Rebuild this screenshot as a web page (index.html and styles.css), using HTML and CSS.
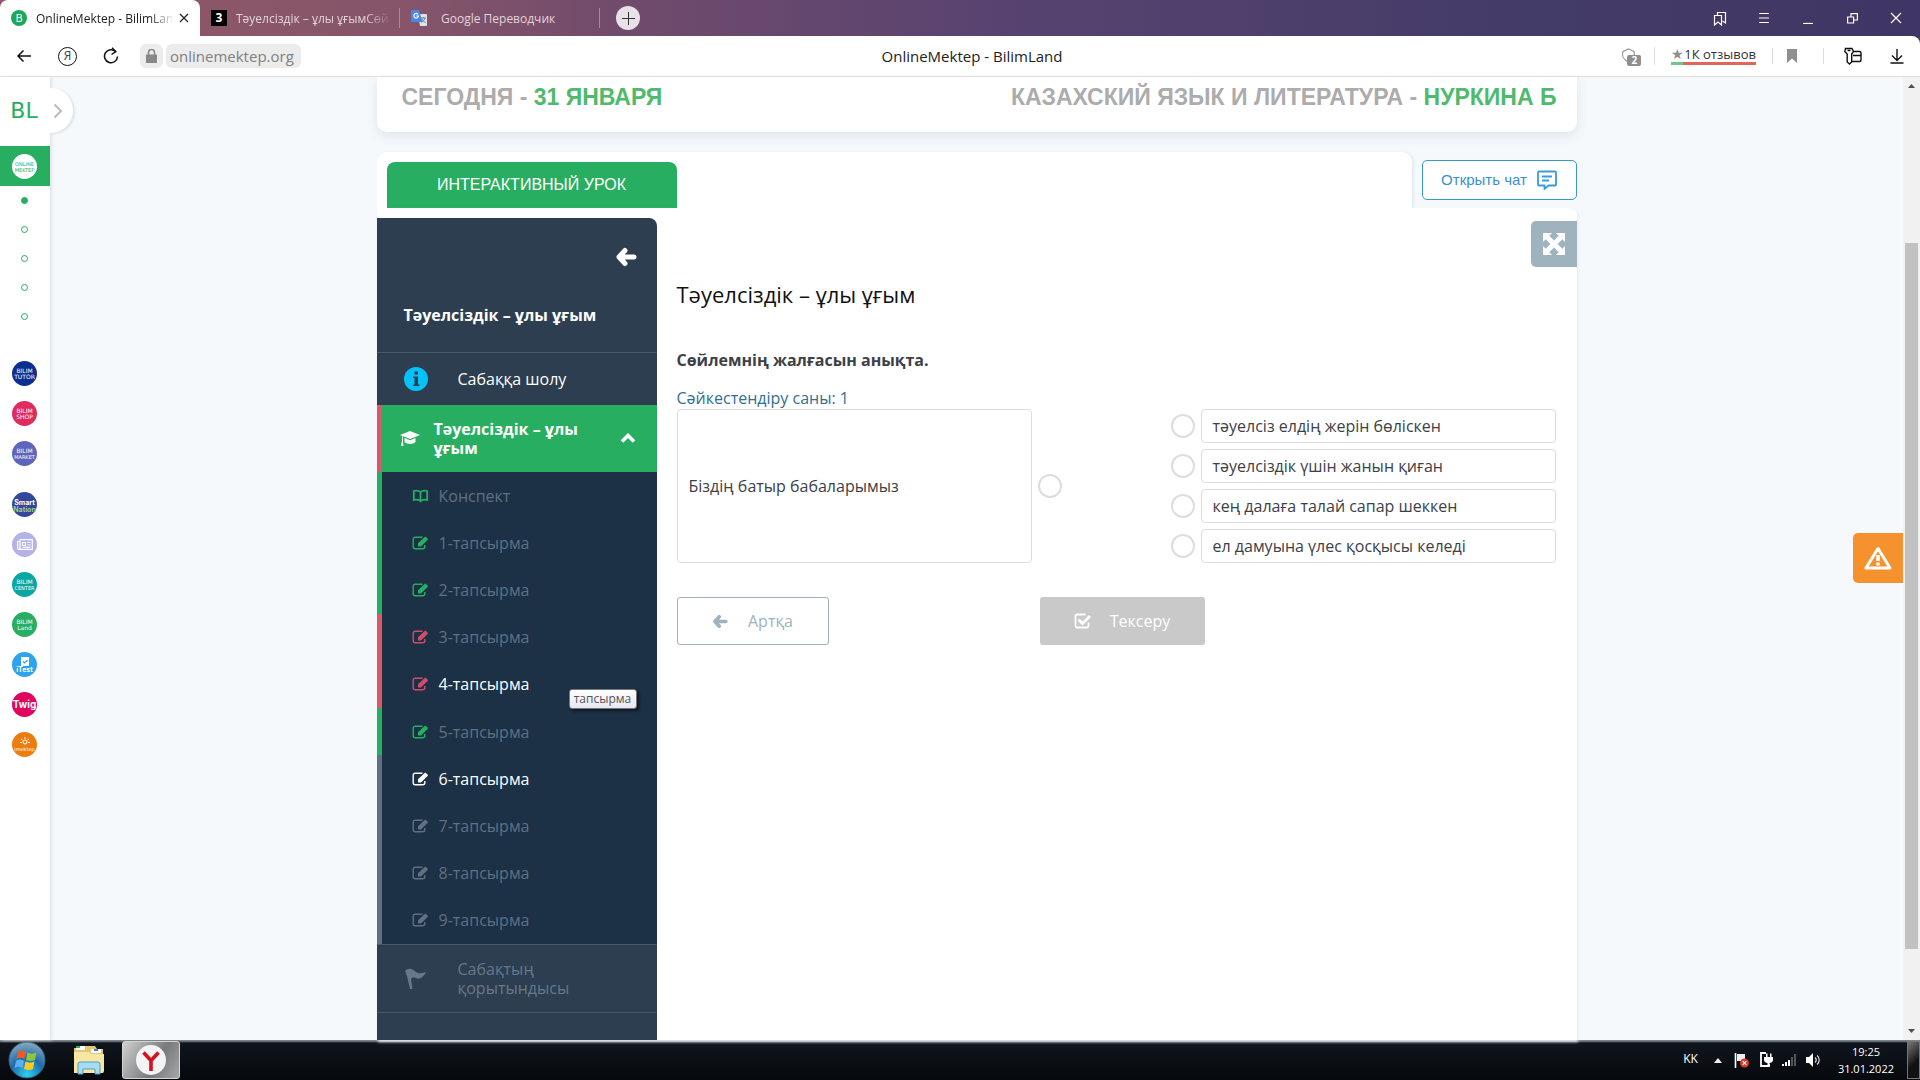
FILE: index.html
```
<!DOCTYPE html>
<html lang="kk">
<head>
<meta charset="utf-8">
<title>OnlineMektep - BilimLand</title>
<link rel="stylesheet" href="styles.css">
</head>
<body>
<svg class="defs" aria-hidden="true">
  <symbol id="i-edit" viewBox="0 0 17 14"><path d="M10.5 1.2H3.2a2 2 0 0 0-2 2v7.6a2 2 0 0 0 2 2h7.6a2 2 0 0 0 2-2V9" fill="none" stroke="currentColor" stroke-width="1.4"/><path d="M6 7.2 12.6.9a1 1 0 0 1 1.3 0l1.7 1.7a1 1 0 0 1 0 1.3L9 10.4H6z" fill="currentColor"/></symbol>
  <symbol id="i-book" viewBox="0 0 17 14"><path d="M8.5 3v9.5M8.5 3C7 1.8 4 1.4 1.8 2v9c2.200-.6 5.200-.2 6.700 1.200C10 10.800 13 10.400 15.200 11V2C13 1.400 10 1.800 8.500 3z" fill="none" stroke="currentColor" stroke-width="1.800"/></symbol>
  <symbol id="i-arrow" viewBox="0 0 22 20"><path d="M10 3.500 4 10l6 6.500M5 10h14" fill="none" stroke="currentColor" stroke-width="5" stroke-linecap="round" stroke-linejoin="round"/></symbol>
</svg>

<header class="tabs">
  <div class="tab tab-active"><span class="fav fav-b">B</span><span class="tab-text">OnlineMektep - BilimLan</span>
    <button class="plain" aria-label="Close tab"><svg width="10" height="10"><path d="M1 1l8 8M9 1l-8 8" stroke="#222" stroke-width="1.200"/></svg></button></div>
  <div class="tab"><span class="fav fav-3">3</span><span class="tab-text">Тәуелсіздік – ұлы ұғымСөй</span></div>
  <div class="tab"><svg class="fav" width="16" height="16" viewBox="0 0 16 16"><path d="M7 4h8a1 1 0 0 1 1 1v10a1 1 0 0 1-1 1H9z" fill="#dfe3e8"/><path d="M10 8h5M12.500 7v1M14 8c-.5 2-2 3.500-3.500 4.500M11 9c.5 1.500 2 3 3.500 3.500" stroke="#6b8096" fill="none"/><path d="M1 0h7l3.500 12H1a1 1 0 0 1-1-1V1a1 1 0 0 1 1-1z" fill="#4a86e8"/><path d="M7 4.300A2.300 2.300 0 1 0 7.500 6H5.300" stroke="#fff" fill="none" stroke-width="1.200"/></svg><span class="tab-text">Google Переводчик</span></div>
  <button class="new-tab" aria-label="New tab"><svg width="13" height="13"><path d="M6.500 0v13M0 6.500h13" stroke="#333"/></svg></button>
  <div class="window-buttons">
    <button class="plain" aria-label="Collections"><svg width="14" height="15"><path d="M1.500 4.500h7v9.500l-3.500-3-3.500 3zM4.500 4V1.500h8V12l-3-2" fill="none" stroke="#fff" stroke-width="1.200"/></svg></button>
    <button class="plain" aria-label="Menu"><svg width="12" height="10"><path d="M1 .5h10M1 5h10M1 9.500h10" stroke="#fff"/></svg></button>
    <button class="plain" aria-label="Minimize"><svg width="12" height="12"><path d="M1 11.500h10" stroke="#fff" stroke-width="1.200"/></svg></button>
    <button class="plain" aria-label="Restore"><svg width="11" height="11"><path d="M.6 4h6v6h-6zM4 3.500V.6h6.400V7H7" fill="none" stroke="#fff" stroke-width="1.200"/></svg></button>
    <button class="plain" aria-label="Close"><svg width="12" height="12"><path d="M1 1l10 10M11 1L1 11" stroke="#fff" stroke-width="1.200"/></svg></button>
  </div>
</header>

<div class="toolbar-wrap">
<nav class="toolbar">
  <div class="tool-left">
    <button class="plain" aria-label="Back"><svg width="16" height="14"><path d="M15 7H2M7.500 1.500L2 7l5.500 5.500" fill="none" stroke="#111" stroke-width="1.500"/></svg></button>
    <button class="ya" aria-label="Yandex">Я</button>
    <button class="plain" aria-label="Reload"><svg width="16" height="18" viewBox="0 0 16 18"><path d="M12.500 4.500A6.500 6.500 0 1 0 14.500 9.500" fill="none" stroke="#111" stroke-width="1.500"/><path d="M9 .8 12.800 4.600 8.500 7.500" fill="none" stroke="#111" stroke-width="1.500"/></svg></button>
    <div class="address"><button class="lock" aria-label="Secure"><svg width="11" height="14"><path d="M0 5.500h11V14H0z" fill="#888"/><path d="M2.500 6V3.500a3 3 0 0 1 6 0V6" fill="none" stroke="#888" stroke-width="1.600"/></svg></button><button class="url">onlinemektep.org</button></div>
  </div>
  <p class="page-name">OnlineMektep - BilimLand</p>
  <div class="tool-right">
    <button class="shield" aria-label="Protect"><svg width="15" height="16"><path d="M7.500 1 13 3.500C14 8 12 12 7.500 14 3 12 .500 8 2 3.500z" fill="none" stroke="#999" stroke-width="1.200"/></svg><span class="badge">2</span></button>
    <button class="reviews"><span class="star">★</span>1К отзывов</button>
    <button class="mark" aria-label="Bookmark"><svg width="10" height="14"><path d="M0 0h10v14L5 9.500 0 14z" fill="#8f8f8f"/></svg></button>
    <button class="plain" aria-label="Passwords"><svg width="18" height="18"><path d="M1.500 1.500h6.500l1.500 3-1.800 2.500v8L5.500 17l-2.300-2V7L.800 4.500zM3.500 3.500h3M9 4.500h6.500a1.500 1.500 0 0 1 1.500 1.500v7a1.500 1.500 0 0 1-1.500 1.500H8M9 8.500h8" fill="none" stroke="#111" stroke-width="1.400"/></svg></button>
    <button class="plain download" aria-label="Downloads"><svg width="14" height="15"><path d="M7 0v11M2 6.500l5 5 5-5M.5 14h13" fill="none" stroke="#111" stroke-width="1.400"/></svg></button>
  </div>
</nav>
</div>

<div class="viewport">
  <aside class="rail">
    <div class="logo">BL</div>
    <button class="expander" aria-label="Expand menu"><svg width="10" height="16"><path d="M1.500 1.500 8 8l-6.500 6.500" fill="none" stroke="#b4bcc4" stroke-width="2"/></svg></button>
    <a class="rail-current" href="#"><span class="coin coin-white">ONLINE<br>MEKTEP</span></a>
    <ul class="dots"><li class="on"></li><li></li><li></li><li></li><li></li></ul>
    <div class="coins">
      <a href="#" class="coin navy">BILIM<br>TUTOR</a>
      <a href="#" class="coin rose">BILIM<br>SHOP</a>
      <a href="#" class="coin violet">BILIM<br><span class="tiny">MARKET</span></a>
    </div>
    <div class="coins coins-next">
      <a href="#" class="coin blue bold">Smart<br><span class="lime">Nation</span></a>
      <a href="#" class="coin lilac" aria-label="News"><svg width="16" height="11"><path d="M3 .7h12.300v9.600H1.500a1 1 0 0 1-.8-1V2.500H3zM3 2v8M5.500 3.500h3v3h-3zM10.500 3.500h3M10.500 6h3M5.500 8.300h8" fill="none" stroke="#fff" stroke-width="1.200"/></svg></a>
      <a href="#" class="coin teal">BILIM<br><span class="tiny">CENTER</span></a>
      <a href="#" class="coin green">BILIM<br>Land</a>
      <a href="#" class="coin sky bold"><svg width="10" height="9"><path d="M1 0h8v9H1z" fill="#fff"/><path d="M3 4.500l1.500 1.500 3-3" fill="none" stroke="#2ea3ee" stroke-width="1.200"/></svg>iTest</a>
      <a href="#" class="coin pink bold twig">Twig</a>
      <a href="#" class="coin orange"><svg width="10" height="9"><circle cx="5" cy="5" r="2" fill="none" stroke="#fff"/><path d="M5 0v2M1 2l1.500 1M9 2L7.500 3M0 5.500h2M8 5.500h2" stroke="#fff"/></svg><span class="tiny">imektep</span></a>
    </div>
  </aside>

  <main class="page">
    <div class="column">
      <section class="lesson-head">
        <h2>СЕГОДНЯ - <b>31 ЯНВАРЯ</b></h2>
        <h2>КАЗАХСКИЙ ЯЗЫК И ЛИТЕРАТУРА - <b>НУРКИНА Б</b></h2>
      </section>
      <div class="tab-row">
        <div class="tab-panel"><button class="lesson-tab">ИНТЕРАКТИВНЫЙ УРОК</button></div>
        <button class="chat">Открыть чат<svg width="20" height="20"><path d="M2 1.500h16a1 1 0 0 1 1 1v12a1 1 0 0 1-1 1h-6.500L7.500 19v-3.500H2a1 1 0 0 1-1-1v-12a1 1 0 0 1 1-1zM5 6.500h10M5 10.500h7" fill="none" stroke="#3a9ade" stroke-width="1.800"/></svg></button>
      </div>
      <section class="workspace">
        <nav class="course">
          <div class="course-head">
            <button class="plain white" aria-label="Hide menu"><svg width="22" height="20"><use href="#i-arrow"/></svg></button>
            <h3>Тәуелсіздік – ұлы ұғым</h3>
          </div>
          <a href="#" class="row"><svg width="24" height="24"><circle cx="12" cy="12" r="12" fill="#07c1fb"/><path d="M10.500 4.500h3.500v3h-3.500zM9 9.500h5v8h1.500v1.500H9v-1.500h1.500V11H9z" fill="#2c3e50"/></svg><span>Сабаққа шолу</span></a>
          <a href="#" class="row row-open"><svg width="20" height="16"><path d="M10 0 20 4 10 8 0 4z" fill="#fff"/><path d="M4.500 7v4c2 2.500 9 2.500 11 0V7L10 9.300z" fill="#fff"/><path d="M2 5v5l-1 5h2.500l-.6-5V5.500z" fill="#fff"/></svg><span>Тәуелсіздік – ұлы ұғым</span><svg width="16" height="11"><path d="M2 8.500l6-6 6 6" fill="none" stroke="#fff" stroke-width="3.600"/></svg></a>
          <ul class="tasks">
            <li class="good"><a href="#"><svg width="17" height="14"><use href="#i-book"/></svg>Конспект</a></li>
            <li class="good"><a href="#"><svg width="17" height="14"><use href="#i-edit"/></svg>1-тапсырма</a></li>
            <li class="good"><a href="#"><svg width="17" height="14"><use href="#i-edit"/></svg>2-тапсырма</a></li>
            <li class="bad"><a href="#"><svg width="17" height="14"><use href="#i-edit"/></svg>3-тапсырма</a></li>
            <li class="bad"><a href="#" class="lit"><svg width="17" height="14"><use href="#i-edit"/></svg>4-тапсырма</a><span class="tip" role="tooltip">тапсырма</span></li>
            <li class="good"><a href="#"><svg width="17" height="14"><use href="#i-edit"/></svg>5-тапсырма</a></li>
            <li class="now"><a href="#" class="lit"><svg width="17" height="14"><use href="#i-edit"/></svg>6-тапсырма</a></li>
            <li><a href="#"><svg width="17" height="14"><use href="#i-edit"/></svg>7-тапсырма</a></li>
            <li><a href="#"><svg width="17" height="14"><use href="#i-edit"/></svg>8-тапсырма</a></li>
            <li><a href="#"><svg width="17" height="14"><use href="#i-edit"/></svg>9-тапсырма</a></li>
          </ul>
          <a href="#" class="row row-end"><svg width="24" height="22"><path d="M1 3C5-1 9 1 12 4c3 2 6 1 10 0-3 6-7 8-10 6-3-1-4 0-5 1l1.500 10H6L3 8z" fill="#66788a"/></svg><span>Сабақтың қорытындысы</span></a>
        </nav>
        <article class="exercise">
          <button class="expand" aria-label="Fullscreen"><svg width="22" height="22"><path d="M0 0h9L6.300 2.700 11 7.400l4.700-4.700L13 0h9v9l-2.700-2.700L14.600 11l4.700 4.700L22 13v9h-9l2.700-2.700L11 14.600l-4.700 4.700L9 22H0v-9l2.700 2.700L7.400 11 2.700 6.300 0 9z" fill="#fff"/></svg></button>
          <h1>Тәуелсіздік – ұлы ұғым</h1>
          <p class="question">Сөйлемнің жалғасын анықта.</p>
          <p class="count">Сәйкестендіру саны: 1</p>
          <div class="match">
            <label class="box" for="left1">Біздің батыр бабаларымыз</label>
            <input type="radio" id="left1" name="left">
            <div class="answers">
              <div class="answer"><input type="radio" id="r1" name="right"><label class="box" for="r1">тәуелсіз елдің жерін бөліскен</label></div>
              <div class="answer"><input type="radio" id="r2" name="right"><label class="box" for="r2">тәуелсіздік үшін жанын қиған</label></div>
              <div class="answer"><input type="radio" id="r3" name="right"><label class="box" for="r3">кең далаға талай сапар шеккен</label></div>
              <div class="answer"><input type="radio" id="r4" name="right"><label class="box" for="r4">ел дамуына үлес қосқысы келеді</label></div>
            </div>
          </div>
          <div class="actions">
            <button class="btn btn-back"><svg width="16" height="15" viewBox="0 0 22 20"><use href="#i-arrow"/></svg>Артқа</button>
            <button class="btn btn-check"><svg width="18" height="16"><path d="M11.500 1.500H3a1.500 1.500 0 0 0-1.500 1.500v10A1.500 1.500 0 0 0 3 14.500h10a1.500 1.500 0 0 0 1.500-1.500V9.500" fill="none" stroke="#fff" stroke-width="1.800"/><path d="M4.500 6.500l4 4L16 3" fill="none" stroke="#fff" stroke-width="2.800"/></svg>Тексеру</button>
          </div>
        </article>
      </section>
    </div>
    <button class="alert" aria-label="Report a problem"><svg width="28" height="24"><path d="M14 2.500 26 22H2z" fill="none" stroke="#fff" stroke-width="3" stroke-linejoin="round"/><path d="M14 9v6M14 16.500v3" stroke="#fff" stroke-width="3.500"/></svg></button>
  </main>

  <div class="scrollbar"><svg width="7" height="4"><path d="M0 4 3.500 0 7 4z" fill="#505050"/></svg><div class="track"><div class="thumb"></div></div><svg width="7" height="4"><path d="M0 0l3.500 4L7 0z" fill="#505050"/></svg></div>
</div>

<footer class="taskbar">
  <button class="start" aria-label="Start"><svg width="38" height="38" viewBox="0 0 38 38"><defs><radialGradient id="orb" cx=".5" cy=".9" r=".9"><stop offset="0" stop-color="#2fd0f5"/><stop offset=".5" stop-color="#1a6cab"/><stop offset="1" stop-color="#8aa9bd"/></radialGradient></defs><circle cx="19" cy="19" r="18" fill="url(#orb)" stroke="#3e5a70"/><path d="M10 11c3-2 5-2 8 0l-1.500 7c-3-2-5-1.500-8 0z" fill="#ec5a2a"/><path d="M19.500 11.500c3 1.500 6 1.500 9 0L27 19c-3 1.500-6 1-9 0z" fill="#8cc63f"/><path d="M8 20c3-2 5-2 8 0l-1.500 7c-3-2-5-1.500-8 0z" fill="#5cb0ee"/><path d="M17.500 20.500c3 1.500 6 1.500 9 0L25 28c-3 1.500-6 1-9 0z" fill="#fcc926"/></svg></button>
  <button class="files" aria-label="Explorer"><svg width="34" height="32" viewBox="0 0 34 32"><path d="M2 4h9l2-2h10l2 3h6v24H2z" fill="#e3c873"/><path d="M4 2h9v4H4z" fill="#fff"/><path d="M4 2h4v2H4z" fill="#35a853"/><path d="M19 5h10v4H19z" fill="#fff"/><path d="M22 5h4v2h-4z" fill="#3b7dd8"/><path d="M2 8h15l2 2h13v17a2 2 0 0 1-2 2H4a2 2 0 0 1-2-2z" fill="#f7e6a4"/><path d="M6 30V20a2 2 0 0 1 2-2h18a2 2 0 0 1 2 2v10h-5v-5H11v5z" fill="#a9dbf2" stroke="#4d9fc8"/></svg></button>
  <button class="running" aria-label="Yandex Browser"><svg width="30" height="30"><circle cx="15" cy="15" r="15" fill="#f4f4f4"/><path d="M7.500 7.500 15 15.500l7.500-8M15 14.500V26" fill="none" stroke="#d4121f" stroke-width="3.600"/></svg></button>
  <div class="tray">
    <span class="lang">KK</span>
    <svg width="8" height="5"><path d="M0 5l4-5 4 5z" fill="#eee"/></svg>
    <svg width="16" height="16"><path d="M1.500 1v15" stroke="#fff" stroke-width="1.600"/><path d="M3 2h8v7H3z" fill="#eee"/><circle cx="10.500" cy="11" r="4.500" fill="#d8392b"/><path d="M8.700 9.200l3.600 3.600M12.300 9.200l-3.600 3.600" stroke="#fff" stroke-width="1.200"/></svg>
    <svg width="14" height="16"><path d="M7 1H2v13h8v-2" fill="none" stroke="#fff" stroke-width="1.800"/><path d="M5 5h9v3c0 2-2 3-3.500 3v3h-2v-3C7 11 5 10 5 8zM7 1.500h1.500V5H7zM11 1.500h1.500V5H11z" fill="#fff"/></svg>
    <svg width="15" height="12"><path d="M0 10h2v2H0zM3 8h2v4H3zM6 6h2v6H6z" fill="#fff"/><path d="M9 3h2v9H9zM12 0h2v12h-2z" fill="#555"/></svg>
    <svg width="16" height="14"><path d="M0 4h3l4-4v14l-4-4H0z" fill="#fff"/><path d="M9 4.500c1.500 1.500 1.500 3.500 0 5M11 2.500c3 2.500 3 6.500 0 9" fill="none" stroke="#ddd" stroke-width="1.200"/></svg>
    <time class="clock">19:25<br>31.01.2022</time>
    <button class="desktop" aria-label="Show desktop"></button>
  </div>
</footer>
</body>
</html>
```
FILE: styles.css
```
* { box-sizing: border-box; }
body {
  margin: 0;
  height: 100vh;
  display: flex;
  flex-direction: column;
  overflow: hidden;
  font-family: "Open Sans", "Noto Sans", sans-serif;
  font-size: 16px;
  color: #3d4147;
}
h1, h2, h3, p, ul { margin: 0; padding: 0; }
ul { list-style: none; }
a { color: inherit; text-decoration: none; }
button { font: inherit; color: inherit; border: 0; margin: 0; padding: 0; background: none; }
svg { display: block; flex: none; }
.defs { display: none; }
.plain { display: flex; align-items: center; justify-content: center; }
.white { color: #fff; }

/* Browser frame */
.tabs {
  height: 36px;
  flex: none;
  display: flex;
  align-items: center;
  background: linear-gradient(90deg, #905866 0, #86556a 21%, #714b6c 32%, #584370 52%, #433b68 80%, #403665 100%);
}
.tab {
  width: 200px;
  height: 36px;
  display: flex;
  align-items: center;
  gap: 14px;
  padding: 0 8px 0 11px;
  font-size: 12px;
  color: #e3d3da;
  position: relative;
}
.tab:nth-child(2) { gap: 9px; }
.tab + .tab::after { content: ""; position: absolute; right: 0; top: 8px; height: 20px; width: 1px; background: #a88796; }
.tab-text { flex: 1; min-width: 0; white-space: nowrap; mask-image: linear-gradient(90deg, #000 82%, transparent); }
.tab:nth-child(3) .tab-text { mask-image: none; }
.tab-active { background: #fff; color: #222; border-radius: 8px 8px 0 0; gap: 9px; padding-right: 11px; }
.tab-active .tab-text { margin-right: -4px; }
.fav { width: 16px; height: 16px; flex: none; text-align: center; line-height: 16px; }
.fav-b { border-radius: 8px; background: #1fa65a; color: #fff; font-size: 11px; }
.fav-3 { background: #000; color: #fff; font-weight: 700; font-size: 12px; }
.new-tab { width: 24px; height: 24px; margin-left: 16px; border-radius: 12px; background: #e9e1e8; display: flex; align-items: center; justify-content: center; }
.window-buttons { margin-left: auto; display: flex; padding-right: 2px; }
.window-buttons button { width: 44px; height: 36px; }

.toolbar-wrap { background: #403665; flex: none; }
.toolbar {
  height: 41px;
  display: grid;
  grid-template-columns: 1fr auto 1fr;
  align-items: center;
  padding: 0 16px;
  background: #fff;
  border-bottom: 1px solid #ddd;
  border-radius: 0 8px 0 0;
}
.tool-left { display: flex; align-items: center; gap: 26px; }
.ya { width: 19px; height: 19px; border: 1px solid #111; border-radius: 10px; font-size: 12px; line-height: 16px; }
.address { display: flex; gap: 3px; margin-left: -5px; }
.lock, .url { height: 24px; background: #ececec; border-radius: 6px; color: #808080; }
.lock { width: 23px; display: flex; align-items: center; justify-content: center; }
.url { padding: 0 7px 0 4px; font-size: 15px; line-height: 22px; }
.page-name { font-size: 15px; color: #222; padding-left: 24px; }
.tool-right { display: flex; align-items: center; justify-content: flex-end; }
.shield { position: relative; width: 34px; height: 18px; border-right: 1px solid #ddd; }
.badge { position: absolute; left: 6px; top: 8px; width: 14px; height: 11px; border-radius: 2px; background: #8f8f8f; color: #fff; font: 700 10px/11px "Open Sans", sans-serif; }
.reviews { margin: 0 16px; padding-bottom: 1px; font-size: 13px; color: #333; line-height: 14px; border-bottom: 3px solid; border-image: linear-gradient(90deg, #74c492 15%, #e2645c 15%) 1; }
.star { color: #8f8f8f; font-size: 14px; }
.mark { width: 52px; height: 16px; padding-left: 14px; border: solid #ddd; border-width: 0 1px; margin-right: 20px; }
.download { margin-left: 28px; }

/* Page area */
.viewport { flex: 1; min-height: 0; display: flex; background: #f5f9fc; }
.rail { width: 50px; flex: none; position: relative; z-index: 2; background: #fff; box-shadow: 2px 0 3px #dfe5ea; display: flex; flex-direction: column; }
.logo { height: 69px; line-height: 68px; text-align: center; font-family: "DejaVu Sans", sans-serif; font-size: 22px; color: #27ae60; padding-right: 2px; }
.expander { position: absolute; left: 28px; top: 11px; width: 45px; height: 45px; border-radius: 23px; background: linear-gradient(90deg, transparent 20px, #fff 20px); display: flex; align-items: center; justify-content: flex-end; padding-right: 10px; filter: drop-shadow(2px 1px 1px #dde3e8); }
.rail-current { height: 40px; background: #27ae60; display: flex; align-items: center; justify-content: center; padding-right: 1px; }
.coin { width: 25px; height: 25px; border-radius: 13px; display: flex; flex-direction: column; align-items: center; justify-content: center; text-align: center; color: #fff; font: 6px/6px "DejaVu Sans", sans-serif; flex: none; white-space: nowrap; }
.coin-white { background: #fff; color: #27ae60; font-size: 5px; }
.dots { display: flex; flex-direction: column; align-items: center; gap: 22px; padding: 11px 2px 0 0; }
.dots li { width: 7px; height: 7px; border: 1px solid #27ae60; border-radius: 4px; }
.dots .on { background: #27ae60; }
.coins { display: flex; flex-direction: column; align-items: center; gap: 15px; padding: 41px 1px 0 0; }
.coins-next { padding-top: 26px; }
.coin:not(:has(svg)) { display: block; padding-top: 7px; }
.bold { font: 700 7px/7px "Inter", sans-serif; }
.coin.twig { font-size: 10px; line-height: 11px; }
.tiny { font-size: 5px; }
.lime { color: #9bd08a; }
.navy { background: #0b2f8e; } .rose { background: #e02b5f; } .violet { background: #5e65bb; }
.blue { background: #33479c; } .lilac { background: #b5b2e6; } .teal { background: #0ba6a4; }
.green { background: #27ae60; } .sky { background: #2ea3ee; } .pink { background: #e0045f; } .orange { background: #ec7c0e; }

.page { flex: 1; min-width: 0; position: relative; display: flex; justify-content: center; }
.column { width: 100%; max-width: 1200px; display: flex; flex-direction: column; }
.lesson-head { display: flex; justify-content: space-between; padding: 6px 20px 21px 25px; background: #fff; border-radius: 0 0 10px 10px; box-shadow: 0 4px 12px #dfe4e8; }
.lesson-head h2 { font: 700 23px/28px "Liberation Sans", Arial, sans-serif; color: #acacac; }
.lesson-head b { color: #4fba6c; }
.tab-row { margin-top: 20px; display: flex; gap: 10px; }
.tab-panel { flex: 1; background: #fff; border-radius: 10px 10px 0 0; padding: 10px 10px 0; box-shadow: 2px 0 3px #e3ebf2; }
.lesson-tab { display: block; width: 290px; height: 46px; background: #27ae60; color: #fff; border-radius: 8px 8px 0 0; font: 16px/46px "Liberation Sans", Arial, sans-serif; }
.chat { margin-top: 8px; width: 155px; height: 40px; display: flex; align-items: center; justify-content: center; gap: 10px; border: 1px solid #3a9bc0; border-radius: 5px; background: #fff; color: #3a8fd0; font: 15px/20px "Liberation Sans", Arial, sans-serif; }
.workspace { flex: 1; min-height: 0; display: flex; background: #fff; border-radius: 0 8px 0 0; padding-top: 10px; box-shadow: 1px 2px 3px #e3ebf2; position: relative; }

/* Course menu */
.course { width: 280px; flex: none; background: #2c3e50; border-radius: 0 8px 0 0; color: #fff; }
.course-head { height: 135px; padding: 29px 20px 0 27px; border-bottom: 1px solid #46586a; display: flex; flex-direction: column; align-items: flex-end; gap: 36px; }
.course-head h3 { width: 100%; font-size: 16px; line-height: 24px; }
.row { display: flex; align-items: center; height: 52px; padding-left: 27px; gap: 30px; line-height: 19px; }
.row-open { height: 67px; background: #27ae60; border-left: 5px solid #d9596a; padding: 0 21px 0 18px; gap: 14px; font-weight: 700; }
.row-open span { flex: 1; padding-right: 16px; }
.tasks { height: 472px; display: grid; grid-auto-rows: 1fr; background: #1c3046; color: #5f7080; }
.tasks li { border-left: 5px solid #5f7080; position: relative; display: flex; }
.tasks a { flex: 1; display: flex; align-items: center; gap: 10px; padding-left: 30px; }
.tasks .good { border-color: #27ae60; } .tasks .good svg { color: #27ae60; }
.tasks .bad { border-color: #d9596a; } .tasks .bad svg { color: #cf4d6c; }
.tasks .lit, .tasks .now svg { color: #fff; }
.tip { position: absolute; left: 187px; top: 28px; width: 68px; height: 20px; border: 1px solid #777; border-radius: 3px; background: linear-gradient(#fff, #e6e7f2); color: #555; font: 12px/17px "Open Sans", sans-serif; text-align: center; box-shadow: 2px 2px 3px #0008; z-index: 1; }
.row-end { height: 69px; color: #66788a; border: solid #46586a; border-width: 1px 0; padding-right: 60px; }

/* Exercise */
.exercise { flex: 1; min-width: 0; padding: 59px 21px 0 20px; }
.expand { position: absolute; right: 0; top: 13px; width: 46px; height: 46px; background: #9fb3bf; border-radius: 5px 0 0 5px; display: flex; align-items: center; justify-content: center; }
h1 { font-size: 22px; line-height: 34px; font-weight: 400; color: #111; }
.question { margin-top: 37px; font-weight: 700; line-height: 24px; }
.count { margin-top: 15px; line-height: 22px; color: #31708f; }
.match { display: flex; align-items: center; gap: 6px; }
.box { flex: 1; border: 1px solid #ddd; border-radius: 4px; padding: 0 11px; display: flex; align-items: center; line-height: 32px; }
.match > .box { align-self: stretch; max-width: 355px; }
.match input { appearance: none; width: 24px; height: 24px; flex: none; margin: 0; border: 2px solid #ddd; border-radius: 12px; background: #fff; }
.answers { flex: 1; max-width: 385px; margin-left: auto; display: flex; flex-direction: column; gap: 6px; }
.answer { display: flex; align-items: center; gap: 6px; }
.actions { display: flex; gap: 211px; margin-top: 34px; }
.btn { height: 48px; display: flex; align-items: center; justify-content: center; border-radius: 3px; }
.btn-back { width: 152px; gap: 20px; border: 1px solid #9fb0bb; color: #9fb3bf; }
.btn-check { width: 165px; gap: 18px; background: #c9c9c9; color: #fff; }
.alert { position: absolute; right: 0; top: 456px; width: 50px; height: 50px; border-radius: 5px 0 0 5px; background: #f6922d; display: flex; align-items: center; justify-content: center; }

.scrollbar { width: 17px; flex: none; background: #f1f1f1; display: flex; flex-direction: column; align-items: center; padding: 7px 0; }
.track { flex: 1; width: 13px; margin: 6px 0; display: grid; grid-template-rows: 16% 1fr 8%; }
.thumb { grid-row: 2; background: #c1c1c1; }

/* Taskbar */
.taskbar { height: 40px; flex: none; display: flex; align-items: center; background: linear-gradient(#7a868c 0, #7a868c 1px, #10151d 3px, #06090d 100%); color: #fff; }
.start { margin-left: 8px; }
.files { margin-left: 26px; }
.running { margin-left: 16px; width: 58px; height: 38px; border: 1px solid #d5d5d5; border-radius: 3px; background: linear-gradient(120deg, #d0d0d0, #77797b 60%, #a5a7a8); display: flex; align-items: center; justify-content: center; }
.tray { margin-left: auto; display: flex; align-items: center; height: 100%; gap: 9px; font-size: 12px; }
.lang { margin-right: 7px; padding-bottom: 4px; }
.tray svg:nth-of-type(1) { margin-right: 3px; }
.clock { margin: 0 4px 0 7px; font-size: 11px; text-align: center; line-height: 17px; }
.desktop { width: 13px; height: 38px; border: 1px solid #777; background: linear-gradient(135deg, #777, #111 60%); }
```
